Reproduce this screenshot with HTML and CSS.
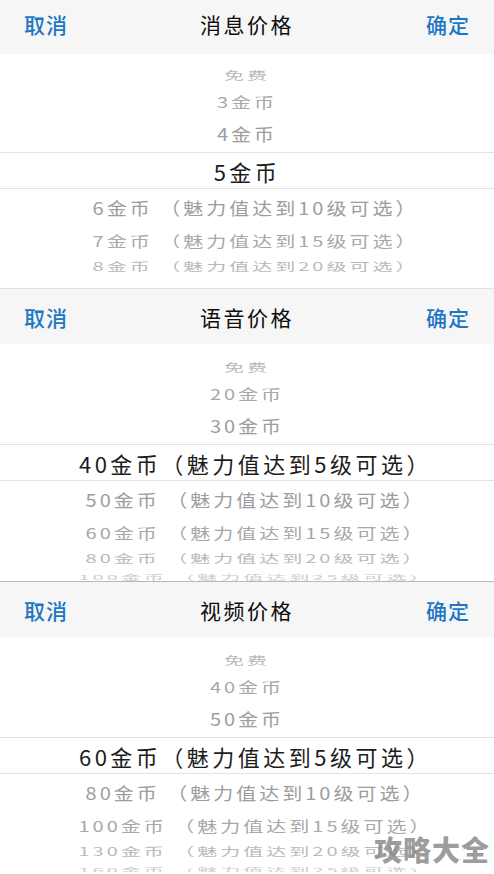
FILE: index.html
```html
<!DOCTYPE html>
<html>
<head>
<meta http-equiv="Content-Type" content="text/html; charset=utf-8" />
<meta name="viewport" content="width=device-width, initial-scale=1">
<title>价格设置</title>
<link rel="stylesheet" href="styles.css">
</head>
<body>

<div class="page">

<div class="bar first">
  <span class="btn">取消</span><span class="title">消息价格</span><span class="btn">确定</span>
</div>
<div class="wheel w1">
  <div class="row r3"><span>免费</span></div>
  <div class="row r2"><span>3金币</span></div>
  <div class="row r1"><span>4金币</span></div>
  <div class="row sel"><span>5金币</span></div>
  <div class="row r1 long"><span>6金币 （魅力值达到10级可选）</span></div>
  <div class="row r2 long"><span>7金币 （魅力值达到15级可选）</span></div>
  <div class="row r3 long"><span>8金币 （魅力值达到20级可选）</span></div>
</div>

<div class="bar">
  <span class="btn">取消</span><span class="title">语音价格</span><span class="btn">确定</span>
</div>
<div class="wheel w2">
  <div class="row r3"><span>免费</span></div>
  <div class="row r2"><span>20金币</span></div>
  <div class="row r1"><span>30金币</span></div>
  <div class="row sel long"><span>40金币（魅力值达到5级可选）</span></div>
  <div class="row r1 long"><span>50金币 （魅力值达到10级可选）</span></div>
  <div class="row r2 long"><span>60金币 （魅力值达到15级可选）</span></div>
  <div class="row r3 long"><span>80金币 （魅力值达到20级可选）</span></div>
  <div class="row r4 long"><span>100金币 （魅力值达到25级可选）</span></div>
</div>

<div class="bar dark">
  <span class="btn">取消</span><span class="title">视频价格</span><span class="btn">确定</span>
</div>
<div class="wheel w3">
  <div class="row r3"><span>免费</span></div>
  <div class="row r2"><span>40金币</span></div>
  <div class="row r1"><span>50金币</span></div>
  <div class="row sel long"><span>60金币（魅力值达到5级可选）</span></div>
  <div class="row r1 long"><span>80金币 （魅力值达到10级可选）</span></div>
  <div class="row r2 long"><span>100金币 （魅力值达到15级可选）</span></div>
  <div class="row r3 long"><span>130金币 （魅力值达到20级可选）</span></div>
  <div class="row r4 long"><span>160金币 （魅力值达到25级可选）</span></div>
</div>

<div class="mark">攻略大全</div>

</div>
</body></html>
```

FILE: styles.css
```css
body { margin: 0; background: white; font-family: "Noto Sans CJK SC", "Noto Sans", sans-serif; }
.page { position: relative; width: 494px; height: 874px; overflow: hidden; }

.bar { height: 56px; box-sizing: border-box; display: flex; align-items: center; justify-content: space-between;
       padding: 0 24px; background: #f6f6f6; border-top: 1px solid #e2e2e2; }
.bar.first { height: 54px; border-top: none; padding-bottom: 6px; }
.bar.dark { border-top-color: #b9b9b9; }
.btn { color: #2076c4; font-size: 21px; letter-spacing: 1px; font-weight: 500; }
.title { color: #0d0d0d; font-size: 21px; letter-spacing: 2.5px; }

.wheel { overflow: hidden; display: flex; flex-direction: column; }
.w1 { height: 234px; padding-top: 9px; box-sizing: border-box; }
.w2 { height: 237px; padding-top: 11px; box-sizing: border-box; }
.w3 { height: 235px; padding-top: 11px; box-sizing: border-box; }

.row { flex: none; display: flex; align-items: center; justify-content: center; white-space: nowrap;
       font-size: 20px; letter-spacing: 3px; color: #9d9d9d; }
.row span { display: inline-block; }
.row.long { padding-left: 17px; }
.sel { height: 37px; box-sizing: border-box; border-top: 1px solid #e3e3e3; border-bottom: 1px solid #e3e3e3;
       font-size: 22px; letter-spacing: 3.5px; color: #1c1c1c; }
.r1 { height: 37px; }
.r1 span { transform: scaleY(0.88); }
.r2 { height: 28px; color: #a8a8a8; }
.r2 span { transform: scaleY(0.75); }
.r3 { height: 24px; color: #b9b9b9; }
.r3 span { transform: scaleY(0.58); }
.r4 { height: 14px; color: #cccccc; }
.r4 span { transform: scaleY(0.32); }

.mark { position: absolute; left: 374px; top: 829px; font-size: 28px; font-weight: 900; letter-spacing: 1px;
        color: rgba(130, 130, 130, 0.8); }
```
